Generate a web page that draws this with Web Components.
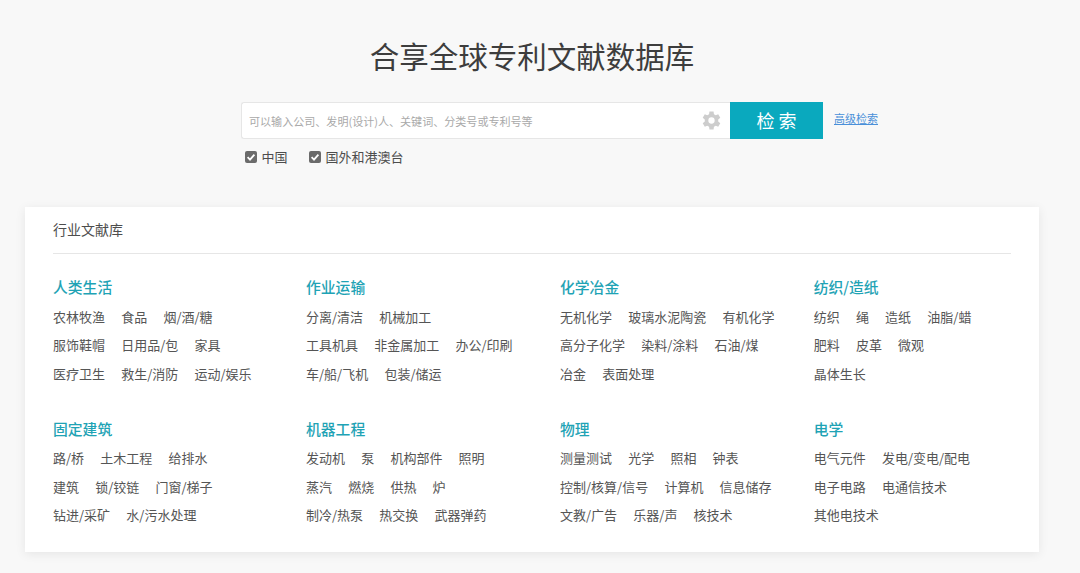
<!DOCTYPE html>
<html lang="zh"><head><meta charset="utf-8"><style>
html,body{margin:0;padding:0;height:573px;overflow:hidden;background:#f8f8f8;font-family:"Liberation Sans","Noto Sans CJK SC",sans-serif;color:#444}
</style></head><body>
<search-hero></search-hero>
<lib-card heading="行业文献库">
<lib-group title="人类生活" rows="农林牧渔,食品,烟/酒/糖|服饰鞋帽,日用品/包,家具|医疗卫生,救生/消防,运动/娱乐"></lib-group>
<lib-group title="作业运输" rows="分离/清洁,机械加工|工具机具,非金属加工,办公/印刷|车/船/飞机,包装/储运"></lib-group>
<lib-group title="化学冶金" rows="无机化学,玻璃水泥陶瓷,有机化学|高分子化学,染料/涂料,石油/煤|冶金,表面处理"></lib-group>
<lib-group title="纺织/造纸" rows="纺织,绳,造纸,油脂/蜡|肥料,皮革,微观|晶体生长"></lib-group>
<lib-group title="固定建筑" rows="路/桥,土木工程,给排水|建筑,锁/铰链,门窗/梯子|钻进/采矿,水/污水处理"></lib-group>
<lib-group title="机器工程" rows="发动机,泵,机构部件,照明|蒸汽,燃烧,供热,炉|制冷/热泵,热交换,武器弹药"></lib-group>
<lib-group title="物理" rows="测量测试,光学,照相,钟表|控制/核算/信号,计算机,信息储存|文教/广告,乐器/声,核技术"></lib-group>
<lib-group title="电学" rows="电气元件,发电/变电/配电|电子电路,电通信技术|其他电技术"></lib-group>
</lib-card>
<script>
const CJK='"Noto Sans CJK SC","Liberation Sans",sans-serif';
function gearPath(){let d='';const pt=(r,a)=>{const t=a*Math.PI/180;return (12+r*Math.sin(t)).toFixed(2)+' '+(12-r*Math.cos(t)).toFixed(2)};
for(let i=0;i<6;i++){const c=i*60;d+=(i?'L':'M')+pt(8.6,c-21)+'L'+pt(11.6,c-13)+'L'+pt(11.6,c+13)+'L'+pt(8.6,c+21)}
return d+'Z'}
class SearchHero extends HTMLElement{constructor(){super();this.attachShadow({mode:'open'}).innerHTML=`<style>
:host{display:block;height:207px;box-sizing:border-box;padding:34px 0 0 241px;font-family:${CJK}}
h1{margin:0 0 0 -241px;width:1064px;text-align:center;font-size:29.5px;line-height:42px;font-weight:400;color:#3d3d3d;height:68px}
.row{display:flex;align-items:flex-start}
.box{box-sizing:border-box;width:489px;height:37px;background:#fff;border:1px solid #e6e6e6;border-right:0;border-radius:3px 0 0 3px;display:flex;align-items:center;justify-content:space-between;padding:0 9px 0 7px;font-size:11.05px;color:#a9a9a9}
.btn{width:93px;height:37px;background:#0aa9be;color:#fff;font-size:18px;line-height:37px;text-align:center;letter-spacing:4px;text-indent:4px}
a{margin:8px 0 0 11px;font-size:11px;line-height:16px;color:#4a90d9;text-decoration:underline}
.checks{display:flex;gap:21.5px;margin:11px 0 0 4px;font-size:13px;line-height:14px;color:#4d4d4d}
label{display:flex;align-items:center;gap:4.5px}
svg{display:block}
</style>
<h1>合享全球专利文献数据库</h1>
<div class="row"><div class="box"><span>可以输入公司、发明(设计)人、关键词、分类号或专利号等</span>
<svg width="19" height="19" viewBox="0 0 24 24"><path fill="none" stroke="#cdcdcd" stroke-width="0" d=""/><path fill="#cdcdcd" fill-rule="evenodd" d="${gearPath()}M12 8a4 4 0 1 0 0 8 4 4 0 0 0 0-8z"/></svg></div>
<div class="btn">检索</div><a>高级检索</a></div>
<div class="checks">
<label>${SearchHero.tick()}中国</label><label>${SearchHero.tick()}国外和港澳台</label></div>`}
static tick(){return `<svg width="12" height="12" viewBox="0 0 12 12"><rect width="12" height="12" rx="2" fill="#6b6b6b"/><path d="M2.600 6.200 5 8.600 9.400 3.600" fill="none" stroke="#fff" stroke-width="1.800"/></svg>`}}
customElements.define('search-hero',SearchHero);
class LibCard extends HTMLElement{constructor(){super();this.attachShadow({mode:'open'}).innerHTML=`<style>
:host{display:block;box-sizing:border-box;margin-left:25px;width:1014px;height:345px;background:#fff;padding:0 0 0 28px;box-shadow:0 2px 10px rgba(0,0,0,.08);font-family:${CJK}}
header{margin-right:28px;height:46px;line-height:44px;border-bottom:1px solid #e6e6e6;font-size:14px;color:#4d4d4d}
.grid{display:grid;grid-template-columns:253px 254px 253.7px 254px;grid-auto-rows:141.5px;padding-top:22px}
</style><header id="h"></header><div class="grid"><slot></slot></div>`;this.shadowRoot.getElementById('h').textContent=this.getAttribute('heading')}}
customElements.define('lib-card',LibCard);
class LibGroup extends HTMLElement{connectedCallback(){if(this.shadowRoot)return;const s=this.attachShadow({mode:'open'});
const rows=this.getAttribute('rows').split('|').map(r=>`<div class="r">${r.split(',').map(x=>`<span>${x}</span>`).join('')}</div>`).join('');
s.innerHTML=`<style>
:host{display:block;font-family:${CJK}}
h3{margin:0 0 4.6px;font-size:14.8px;line-height:22px;font-weight:500;color:#1fa3b5}
.r{display:flex;gap:16.2px;font-size:13px;line-height:28.6px;color:#555}
</style><h3>${this.getAttribute('title')}</h3>${rows}`;}}
customElements.define('lib-group',LibGroup);
</script>
</body></html>
